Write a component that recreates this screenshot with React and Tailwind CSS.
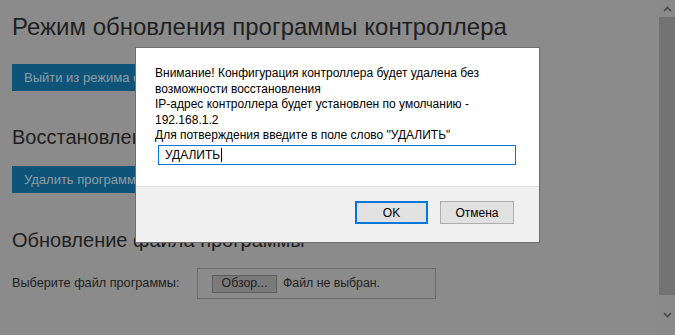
import React from 'react'

const font = { fontFamily: '"Liberation Sans", Arial, sans-serif' }

const ScrollArrow = ({ up }) => (
  <svg width="9" height="6" viewBox="0 0 9 6" className="fill-none stroke-[#474747]" strokeWidth="1.6">
    {up ? <path d="M1 5 L4.5 1.5 L8 5" /> : <path d="M1 1 L4.5 4.5 L8 1" />}
  </svg>
)

const ConfirmDialog = () => (
  <div className="absolute left-[135px] top-[47px] w-[405px] h-[196px] bg-white border border-[#6f6f6f] flex flex-col text-black text-[12px]">
    <div className="flex-1 pl-[19px] pr-[20px] pt-[18px]">
      <p className="leading-[15.5px]">
        Внимание! Конфигурация контроллера будет удалена без<br />
        возможности восстановления<br />
        IP-адрес контроллера будет установлен по умолчанию -<br />
        192.168.1.2<br />
        Для потверждения введите в поле слово "УДАЛИТЬ"
      </p>
      <div className="mt-[1px] ml-[3px] w-[358px] h-[20px] border border-[#0078d7] flex items-center pl-[6px] text-[12px]">
        УДАЛИТЬ<span className="w-px h-[14px] bg-black ml-px" />
      </div>
    </div>
    <div className="h-[56px] bg-[#f0f0f0] border-t border-[#dfdfdf] flex justify-end gap-[12px] pt-[14px] pr-[25px]">
      <button className="w-[73px] h-[23px] bg-[#e1e1e1] border-2 border-[#0078d7] text-[12px]">OK</button>
      <button className="w-[74px] h-[23px] bg-[#e1e1e1] border border-[#adadad] text-[12px]">Отмена</button>
    </div>
  </div>
)

export default function App() {
  return (
    <div className="relative w-[675px] h-[335px] overflow-hidden bg-[#8b8b8b] flex" style={font}>
      <div className="flex-1 px-3 text-[#1f1f1f]">
        <h1 className="mt-[14px] text-[24px] leading-[26px]">Режим обновления программы контроллера</h1>
        <button className="mt-[24px] h-[27px] px-3 bg-[#0e5478] text-[#8e9da7] text-[13px]">Выйти из режима обновления</button>
        <h2 className="mt-[35px] text-[20px] leading-[22px]">Восстановление программы</h2>
        <button className="mt-[18px] h-[27px] px-3 bg-[#0e5478] text-[#8e9da7] text-[13px]">Удалить программу</button>
        <h2 className="mt-[36px] text-[20px] leading-[22px]">Обновление файла программы</h2>
        <div className="mt-[17px] flex items-center text-[13px]">
          <span className="w-[185px] text-[12.7px]">Выберите файл программы:</span>
          <div className="w-[239px] h-[31px] border border-[#6c6c6c] flex items-center pl-[14px] gap-[6px] text-[12.3px]">
            <span className="h-[18px] w-[65px] bg-[#7a7a7a] border border-[#5e5e5e] flex items-center justify-center">Обзор...</span>
            <span>Файл не выбран.</span>
          </div>
        </div>
      </div>
      <div className="w-[16px] flex flex-col items-center bg-[#8a8a8a]">
        <div className="h-[17px] flex items-center justify-center"><ScrollArrow up /></div>
        <div className="w-full h-[278px] bg-[#737373]" />
        <div className="flex-1 flex items-center justify-center"><ScrollArrow /></div>
      </div>
      <ConfirmDialog />
    </div>
  )
}
